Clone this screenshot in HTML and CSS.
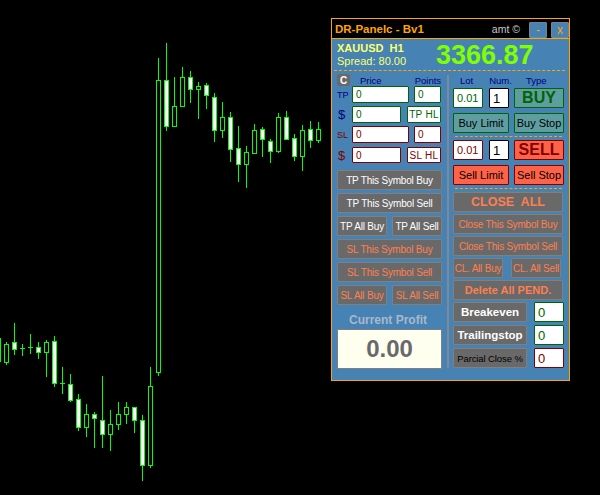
FILE: index.html
```html
<!DOCTYPE html>
<html lang="en">
<head>
<meta charset="utf-8">
<title>DR-Panelc</title>
<link rel="stylesheet" href="styles.css">
</head>
<body>
<svg class="chart" width="600" height="495" viewBox="0 0 600 495" aria-hidden="true">
<path class="wick" d="M.5 338V362M6.5 342V365M14.5 323V355M22.5 344V356M30.5 334V354M38.5 342V359M46.5 340V377M54.5 336V387M62.5 367V394M70.5 374V402M78.5 394V431M86.5 404V437M94.5 412V448M102.5 376V448M110.5 410V451M118.5 402V430M126.5 402V424M134.5 407V433M142.5 415V481M150.5 367V468M158.5 58V376M166.5 43V131M174.5 77V127M182.5 67V107M190.5 71V103M198.5 82V119M206.5 83V109M214.5 93V142M222.5 102V138M230.5 112V162M238.5 126V182M246.5 146V188M254.5 124V153M262.5 127V157M270.5 139V163M278.5 113V153M286.5 111V140M294.5 134V161M302.5 125V171M310.5 121V148M318.5 122V143"/>
<path class="wick" d="M20 348.500H25M28 347.500H33M60 383.500H65"/>
<rect class="hollow" x="4.500" y="344.500" width="4" height="18"/>
<rect class="solid" x="12.500" y="342.500" width="4" height="7"/>
<rect class="solid" x="36.500" y="347.500" width="4" height="5"/>
<rect class="hollow" x="44.500" y="342.500" width="4" height="10"/>
<rect class="solid" x="52.500" y="341.500" width="4" height="42"/>
<rect class="solid" x="68.500" y="384.500" width="4" height="16"/>
<rect class="solid" x="76.500" y="399.500" width="4" height="28"/>
<rect class="hollow" x="84.500" y="414.500" width="4" height="13"/>
<rect class="solid" x="92.500" y="414.500" width="4" height="4"/>
<rect class="solid" x="100.500" y="420.500" width="4" height="14"/>
<rect class="hollow" x="108.500" y="424.500" width="4" height="10"/>
<rect class="hollow" x="116.500" y="414.500" width="4" height="10"/>
<rect class="hollow" x="124.500" y="407.500" width="4" height="7"/>
<rect class="solid" x="132.500" y="407.500" width="4" height="13"/>
<rect class="solid" x="140.500" y="420.500" width="4" height="45"/>
<rect class="hollow" x="148.500" y="386.500" width="4" height="79"/>
<rect class="hollow" x="156.500" y="80.500" width="4" height="292"/>
<rect class="solid" x="164.500" y="80.500" width="4" height="46"/>
<rect class="hollow" x="172.500" y="106.500" width="4" height="20"/>
<rect class="hollow" x="180.500" y="77.500" width="4" height="29"/>
<rect class="solid" x="188.500" y="77.500" width="4" height="12"/>
<rect class="hollow" x="196.500" y="86.500" width="4" height="3"/>
<rect class="solid" x="204.500" y="85.500" width="4" height="10"/>
<rect class="solid" x="212.500" y="97.500" width="4" height="33"/>
<rect class="hollow" x="220.500" y="117.500" width="4" height="13"/>
<rect class="solid" x="228.500" y="117.500" width="4" height="32"/>
<rect class="solid" x="236.500" y="148.500" width="4" height="16"/>
<rect class="hollow" x="244.500" y="152.500" width="4" height="12"/>
<rect class="hollow" x="252.500" y="130.500" width="4" height="23"/>
<rect class="solid" x="260.500" y="129.500" width="4" height="10"/>
<rect class="solid" x="268.500" y="141.500" width="4" height="10"/>
<rect class="hollow" x="276.500" y="117.500" width="4" height="34"/>
<rect class="solid" x="284.500" y="117.500" width="4" height="22"/>
<rect class="solid" x="292.500" y="138.500" width="4" height="18"/>
<rect class="hollow" x="300.500" y="130.500" width="4" height="26"/>
<rect class="solid" x="308.500" y="129.500" width="4" height="11"/>
<rect class="hollow" x="316.500" y="129.500" width="4" height="11"/>
</svg>

<section class="panel">
  <header class="titlebar">
    <span class="title">DR-Panelc - Bv1</span>
    <span class="copyright">amt ©</span>
    <span class="win-btn win-min">-</span>
    <span class="win-btn">x</span>
  </header>

  <div class="quote">
    <div class="symbol">
      <div class="pair">XAUUSD&nbsp; H1</div>
      <div class="spread">Spread: 80.00</div>
    </div>
    <div class="price">3366.87</div>
  </div>
  <div class="rule"></div>

  <div class="columns">
    <div class="col-left">
      <div class="head-left">
        <span class="clear-btn">C</span>
        <span class="lbl lbl-price">Price</span>
        <span class="lbl lbl-points">Points</span>
      </div>
      <div class="levels">
        <div class="level">
          <span class="side tp">TP</span><span class="field good wide">0</span><span class="field good short">0</span>
        </div>
        <div class="level">
          <span class="side tp money">$</span><span class="field good mid">0</span><span class="field good tag">TP HL</span>
        </div>
        <div class="level">
          <span class="side sl">SL</span><span class="field bad wide">0</span><span class="field bad short">0</span>
        </div>
        <div class="level last">
          <span class="side sl money">$</span><span class="field bad mid">0</span><span class="field bad tag">SL HL</span>
        </div>
      </div>
      <div class="stack">
        <div class="btn gray white">TP This Symbol Buy</div>
        <div class="btn gray white">TP This Symbol Sell</div>
        <div class="pair-row">
          <div class="btn gray white">TP All Buy</div>
          <div class="btn gray white">TP All Sell</div>
        </div>
        <div class="btn gray coral">SL This Symbol Buy</div>
        <div class="btn gray coral">SL This Symbol Sell</div>
        <div class="pair-row">
          <div class="btn gray coral">SL All Buy</div>
          <div class="btn gray coral">SL All Sell</div>
        </div>
      </div>
      <div class="profit-label">Current Profit</div>
      <div class="profit">0.00</div>
    </div>

    <div class="divider"></div>

    <div class="col-right">
      <div class="head-right">
        <span class="lbl">Lot</span>
        <span class="lbl">Num.</span>
        <span class="lbl">Type</span>
      </div>
      <div class="order-row">
        <span class="field good lot">0.01</span>
        <span class="field num">1</span>
        <div class="btn buy big">BUY</div>
      </div>
      <div class="order-row second">
        <div class="btn buy limit">Buy Limit</div>
        <div class="btn buy stop">Buy Stop</div>
      </div>
      <div class="rule rule-in"></div>
      <div class="order-row">
        <span class="field bad lot">0.01</span>
        <span class="field num">1</span>
        <div class="btn sell big">SELL</div>
      </div>
      <div class="order-row second">
        <div class="btn sell limit">Sell Limit</div>
        <div class="btn sell stop">Sell Stop</div>
      </div>
      <div class="rule rule-in"></div>
      <div class="close-stack">
        <div class="btn gray coral close-all">CLOSE&nbsp; ALL</div>
        <div class="btn gray coral">Close This Symbol Buy</div>
        <div class="btn gray coral">Close This Symbol Sell</div>
        <div class="cl-row">
          <div class="btn gray coral">CL. All Buy</div>
          <div class="btn gray coral">CL. All Sell</div>
        </div>
        <div class="btn gray coral delete">Delete All PEND.</div>
        <div class="tool-row">
          <div class="btn gray white tool">Breakeven</div>
          <span class="field good tool-field">0</span>
        </div>
        <div class="tool-row">
          <div class="btn gray white tool">Trailingstop</div>
          <span class="field good tool-field">0</span>
        </div>
        <div class="tool-row">
          <div class="btn gray partial">Parcial Close %</div>
          <span class="field bad tool-field">0</span>
        </div>
      </div>
    </div>
  </div>
</section>
</body>
</html>
```

FILE: styles.css
```css
* { box-sizing: border-box; }

html, body {
  margin: 0;
  height: 100%;
  background: #000;
  overflow: hidden;
  font-family: "Liberation Sans", Arial, sans-serif;
}

.chart {
  display: block;
  shape-rendering: crispEdges;
}
.wick { stroke: #00ff00; stroke-width: 1; fill: none; }
.solid { fill: #fff; stroke: #00ff00; stroke-width: 1; }
.hollow { fill: #000; stroke: #00ff00; stroke-width: 1; }

.panel {
  position: absolute;
  left: 331px;
  top: 18px;
  width: 239px;
  height: 363px;
  background: #4682b4;
  border: 1px solid #ffa500;
}

.titlebar {
  display: flex;
  align-items: center;
  height: 20px;
  padding: 0 0 0 3px;
  background: #000;
  border-bottom: 1px solid #ffa500;
}
.title { font-size: 11.500px; font-weight: bold; color: #ffa500; }
.copyright { margin-left: auto; margin-right: 9px; font-size: 10.500px; color: #c8c8c8; }
.win-btn {
  display: flex;
  align-items: center;
  justify-content: center;
  width: 18px;
  height: 16px;
  margin-top: 3px;
  background: #4682b4;
  border: 1px solid #808080;
  border-radius: 1px;
  color: #ffa500;
  font-size: 12px;
  line-height: 1;
}
.win-min { margin-right: 4px; }

.quote {
  display: flex;
  height: 31px;
  padding-left: 5px;
}
.symbol { width: 99px; padding-top: 3px; }
.pair { font-size: 11px; line-height: 13px; font-weight: bold; color: #ffff66; }
.spread { font-size: 11px; line-height: 13px; color: #ffff66; }
.price {
  font-size: 27px;
  line-height: 33px;
  font-weight: bold;
  color: #7fff00;
  white-space: nowrap;
}

.rule {
  height: 0;
  margin: 0 4px 0 2px;
  border-top: 1px dashed #ffa500;
}

.columns { display: flex; padding-left: 5px; }

.col-left { width: 105px; padding-top: 3px; }

.head-left {
  display: flex;
  align-items: center;
  height: 12px;
}
.clear-btn {
  display: flex;
  align-items: center;
  justify-content: center;
  width: 13px;
  height: 12px;
  background: #696969;
  border-radius: 2px;
  color: #fff;
  font-size: 10px;
  font-weight: bold;
}
.lbl { font-size: 9.500px; color: #000080; }
.lbl-price { margin-left: 10px; }
.lbl-points { margin-left: 33px; }

.levels {
  display: flex;
  flex-direction: column;
  gap: 3px;
}
.level { display: flex; height: 17px; }
.level.last { margin-top: 1px; height: 16px; }
.side {
  display: flex;
  align-items: center;
  width: 15px;
  font-size: 9px;
}
.tp { color: #000080; }
.sl { color: #800000; }
.money { font-size: 13px; padding-left: 1px; }

.field {
  display: flex;
  align-items: center;
  padding-left: 3px;
  background: #fff;
  border: 1px solid #006400;
  border-radius: 1px;
  color: #006400;
  font-size: 10px;
}
.field.bad { border-color: #800000; color: #800000; }
.field.wide { width: 57px; }
.field.short { width: 27px; margin-left: 5px; }
.field.mid { width: 49px; }
.field.tag {
  justify-content: center;
  width: 34px;
  margin-left: 6px;
  padding: 0;
  letter-spacing: .3px;
}

.btn {
  display: flex;
  align-items: center;
  justify-content: center;
  height: 20px;
  font-size: 10px;
  letter-spacing: -.2px;
  white-space: nowrap;
  border: 1px solid #808080;
  border-radius: 1px;
}
.gray { background: #696969; }
.white { color: #fff; }
.coral { color: #ff7f50; }

.stack {
  display: flex;
  flex-direction: column;
  gap: 3px;
  margin-top: 7px;
}
.pair-row { display: flex; justify-content: space-between; }
.pair-row .btn { width: 50px; }

.profit-label {
  margin-top: 7px;
  padding-right: 3px;
  font-size: 12px;
  line-height: 16px;
  font-weight: bold;
  text-align: center;
  color: #a9b8c9;
}
.profit {
  display: flex;
  align-items: center;
  justify-content: center;
  height: 40px;
  margin-top: 1px;
  background: #fffff0;
  border: 1px solid #808080;
  color: #696969;
  font-size: 24px;
  font-weight: bold;
}

.divider {
  width: 2px;
  height: 293px;
  margin: 4px 4px 0 5px;
  background: #7f8a96;
}

.col-right { width: 111px; }

.head-right {
  display: flex;
  align-items: center;
  height: 14px;
  margin-top: 2px;
  padding-left: 7px;
}
.head-right .lbl:nth-child(2) { margin-left: 16px; }
.head-right .lbl:nth-child(3) { margin-left: 14px; }

.order-row { display: flex; margin-top: 1px; }
.order-row.second { margin-top: 5px; }
.order-row .field { height: 20px; font-size: 11px; }
.lot { width: 30px; }
.order-row .field.num {
  width: 20px;
  margin-left: 6px;
  border-color: #000;
  color: #000;
  font-size: 13px;
}
.btn.big { width: 50px; margin-left: 5px; font-weight: bold; font-size: 16px; letter-spacing: 0; }
.btn.limit { width: 56px; font-size: 11px; letter-spacing: 0; }
.btn.stop { width: 50px; margin-left: 5px; font-size: 11px; letter-spacing: 0; }
.buy { background: #5f9ea0; border-color: #006400; color: #000; }
.buy.big { color: #006400; }
.sell { background: #ff6347; border-color: #800000; color: #000; }
.sell.big { color: #800000; }

.rule-in { margin: 3px 2px 3px 2px; }

.close-stack {
  display: flex;
  flex-direction: column;
  gap: 2px;
  margin-top: 1px;
}
.close-stack > .btn { width: 110px; }
.btn.close-all { font-size: 12.500px; font-weight: bold; letter-spacing: 0; }
.cl-row { display: flex; gap: 8px; }
.cl-row .btn { width: 50px; }
.btn.delete { font-size: 11px; font-weight: bold; letter-spacing: 0; }
.tool-row { display: flex; }
.tool-row + .tool-row { margin-top: 1px; }
.btn.tool {
  width: 74px;
  font-size: 11.500px;
  font-weight: bold;
  letter-spacing: 0;
}
.btn.partial { width: 74px; color: #000; font-size: 9.500px; letter-spacing: -.1px; }
.tool-field {
  width: 30px;
  height: 20px;
  margin-left: 7px;
  font-size: 13px;
}
```
